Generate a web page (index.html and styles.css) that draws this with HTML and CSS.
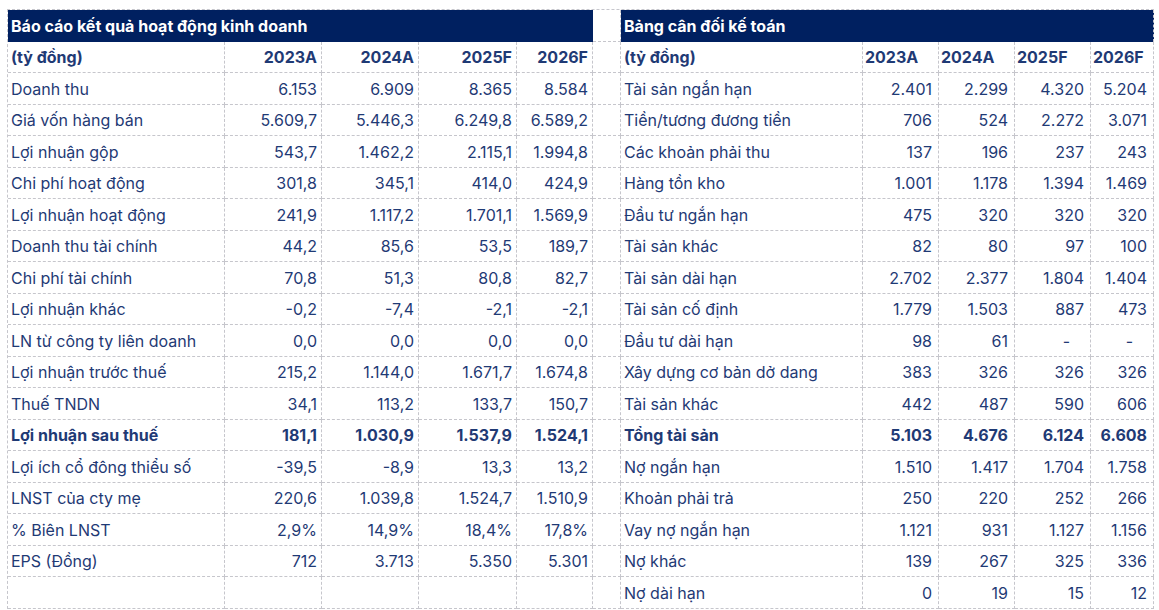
FILE: index.html
```html
<!DOCTYPE html>
<html lang="vi">
<head>
<meta charset="utf-8">
<link rel="stylesheet" href="styles.css">
</head>
<body>
<div class="sheet">
  <div class="c title">Báo cáo kết quả hoạt động kinh doanh</div>
  <div class="c gap"></div>
  <div class="c title title-r">Bảng cân đối kế toán</div>

  <div class="c b">(tỷ đồng)</div><div class="c n b">2023A</div><div class="c n b">2024A</div><div class="c n b">2025F</div><div class="c n b">2026F</div>
  <div class="c gap"></div>
  <div class="c b">(tỷ đồng)</div><div class="c h b">2023A</div><div class="c h b">2024A</div><div class="c h b">2025F</div><div class="c h b">2026F</div>

  <div class="c">Doanh thu</div><div class="c n">6.153</div><div class="c n">6.909</div><div class="c n">8.365</div><div class="c n">8.584</div>
  <div class="c gap"></div>
  <div class="c">Tài sản ngắn hạn</div><div class="c r">2.401</div><div class="c r">2.299</div><div class="c r">4.320</div><div class="c r">5.204</div>

  <div class="c">Giá vốn hàng bán</div><div class="c n">5.609,7</div><div class="c n">5.446,3</div><div class="c n">6.249,8</div><div class="c n">6.589,2</div>
  <div class="c gap"></div>
  <div class="c">Tiền/tương đương tiền</div><div class="c r">706</div><div class="c r">524</div><div class="c r">2.272</div><div class="c r">3.071</div>

  <div class="c">Lợi nhuận gộp</div><div class="c n">543,7</div><div class="c n">1.462,2</div><div class="c n">2.115,1</div><div class="c n">1.994,8</div>
  <div class="c gap"></div>
  <div class="c">Các khoản phải thu</div><div class="c r">137</div><div class="c r">196</div><div class="c r">237</div><div class="c r">243</div>

  <div class="c">Chi phí hoạt động</div><div class="c n">301,8</div><div class="c n">345,1</div><div class="c n">414,0</div><div class="c n">424,9</div>
  <div class="c gap"></div>
  <div class="c">Hàng tồn kho</div><div class="c r">1.001</div><div class="c r">1.178</div><div class="c r">1.394</div><div class="c r">1.469</div>

  <div class="c">Lợi nhuận hoạt động</div><div class="c n">241,9</div><div class="c n">1.117,2</div><div class="c n">1.701,1</div><div class="c n">1.569,9</div>
  <div class="c gap"></div>
  <div class="c">Đầu tư ngắn hạn</div><div class="c r">475</div><div class="c r">320</div><div class="c r">320</div><div class="c r">320</div>

  <div class="c">Doanh thu tài chính</div><div class="c n">44,2</div><div class="c n">85,6</div><div class="c n">53,5</div><div class="c n">189,7</div>
  <div class="c gap"></div>
  <div class="c">Tài sản khác</div><div class="c r">82</div><div class="c r">80</div><div class="c r">97</div><div class="c r">100</div>

  <div class="c">Chi phí tài chính</div><div class="c n">70,8</div><div class="c n">51,3</div><div class="c n">80,8</div><div class="c n">82,7</div>
  <div class="c gap"></div>
  <div class="c">Tài sản dài hạn</div><div class="c r">2.702</div><div class="c r">2.377</div><div class="c r">1.804</div><div class="c r">1.404</div>

  <div class="c">Lợi nhuận khác</div><div class="c n">-0,2</div><div class="c n">-7,4</div><div class="c n">-2,1</div><div class="c n">-2,1</div>
  <div class="c gap"></div>
  <div class="c">Tài sản cố định</div><div class="c r">1.779</div><div class="c r">1.503</div><div class="c r">887</div><div class="c r">473</div>

  <div class="c">LN từ công ty liên doanh</div><div class="c n">0,0</div><div class="c n">0,0</div><div class="c n">0,0</div><div class="c n">0,0</div>
  <div class="c gap"></div>
  <div class="c">Đầu tư dài hạn</div><div class="c r">98</div><div class="c r">61</div><div class="c r dash">-</div><div class="c r dash">-</div>

  <div class="c">Lợi nhuận trước thuế</div><div class="c n">215,2</div><div class="c n">1.144,0</div><div class="c n">1.671,7</div><div class="c n">1.674,8</div>
  <div class="c gap"></div>
  <div class="c">Xây dựng cơ bản dở dang</div><div class="c r">383</div><div class="c r">326</div><div class="c r">326</div><div class="c r">326</div>

  <div class="c">Thuế TNDN</div><div class="c n">34,1</div><div class="c n">113,2</div><div class="c n">133,7</div><div class="c n">150,7</div>
  <div class="c gap"></div>
  <div class="c">Tài sản khác</div><div class="c r">442</div><div class="c r">487</div><div class="c r">590</div><div class="c r">606</div>

  <div class="c b">Lợi nhuận sau thuế</div><div class="c n b">181,1</div><div class="c n b">1.030,9</div><div class="c n b">1.537,9</div><div class="c n b">1.524,1</div>
  <div class="c gap"></div>
  <div class="c b">Tổng tài sản</div><div class="c r b">5.103</div><div class="c r b">4.676</div><div class="c r b">6.124</div><div class="c r b">6.608</div>

  <div class="c">Lợi ích cổ đông thiểu số</div><div class="c n">-39,5</div><div class="c n">-8,9</div><div class="c n">13,3</div><div class="c n">13,2</div>
  <div class="c gap"></div>
  <div class="c">Nợ ngắn hạn</div><div class="c r">1.510</div><div class="c r">1.417</div><div class="c r">1.704</div><div class="c r">1.758</div>

  <div class="c">LNST của cty mẹ</div><div class="c n">220,6</div><div class="c n">1.039,8</div><div class="c n">1.524,7</div><div class="c n">1.510,9</div>
  <div class="c gap"></div>
  <div class="c">Khoản phải trả</div><div class="c r">250</div><div class="c r">220</div><div class="c r">252</div><div class="c r">266</div>

  <div class="c">% Biên LNST</div><div class="c n">2,9%</div><div class="c n">14,9%</div><div class="c n">18,4%</div><div class="c n">17,8%</div>
  <div class="c gap"></div>
  <div class="c">Vay nợ ngắn hạn</div><div class="c r">1.121</div><div class="c r">931</div><div class="c r">1.127</div><div class="c r">1.156</div>

  <div class="c">EPS (Đồng)</div><div class="c n">712</div><div class="c n">3.713</div><div class="c n">5.350</div><div class="c n">5.301</div>
  <div class="c gap"></div>
  <div class="c">Nợ khác</div><div class="c r">139</div><div class="c r">267</div><div class="c r">325</div><div class="c r">336</div>

  <div class="c"></div><div class="c n"></div><div class="c n"></div><div class="c n"></div><div class="c n"></div>
  <div class="c gap"></div>
  <div class="c">Nợ dài hạn</div><div class="c r">0</div><div class="c r">19</div><div class="c r">15</div><div class="c r">12</div>
</div>
</body>
</html>
```

FILE: styles.css
```css
html, body {
  margin: 0;
  padding: 0;
  background: #ffffff;
}

body {
  font-family: Inter, "Noto Sans", "Liberation Sans", sans-serif;
  font-size: 16px;
  color: #1f3a75;
}

.sheet {
  display: grid;
  grid-template-columns: 217px 97px 97px 98px 76px 28px 242px 76px 76px 76px 63px;
  grid-template-rows: repeat(9, 32px 31px) 32px;
  margin: 9px 0 0 7px;
  border-left: 1px dashed #c6c6cc;
  border-top: 1px dashed #c6c6cc;
  width: max-content;
}

.c {
  box-sizing: border-box;
  display: flex;
  align-items: center;
  padding: 0 3px;
  border-right: 1px dashed #c6c6cc;
  border-bottom: 1px dashed #c6c6cc;
  white-space: nowrap;
  overflow: hidden;
}

.title {
  grid-column: span 5;
  background: #002060;
  color: #ffffff;
  font-weight: 700;
  border-right-color: transparent;
  border-bottom: none;
}

.title-r {
  border-right: 1px dashed #c6c6cc;
}

.gap {
  padding: 0;
}

.n {
  justify-content: flex-end;
  padding-right: 4px;
}

.r {
  justify-content: flex-end;
  padding-right: 6px;
}

.h {
  justify-content: flex-start;
  padding-left: 2px;
}

.dash {
  padding-right: 20px;
}

.b {
  font-weight: 700;
}
```
